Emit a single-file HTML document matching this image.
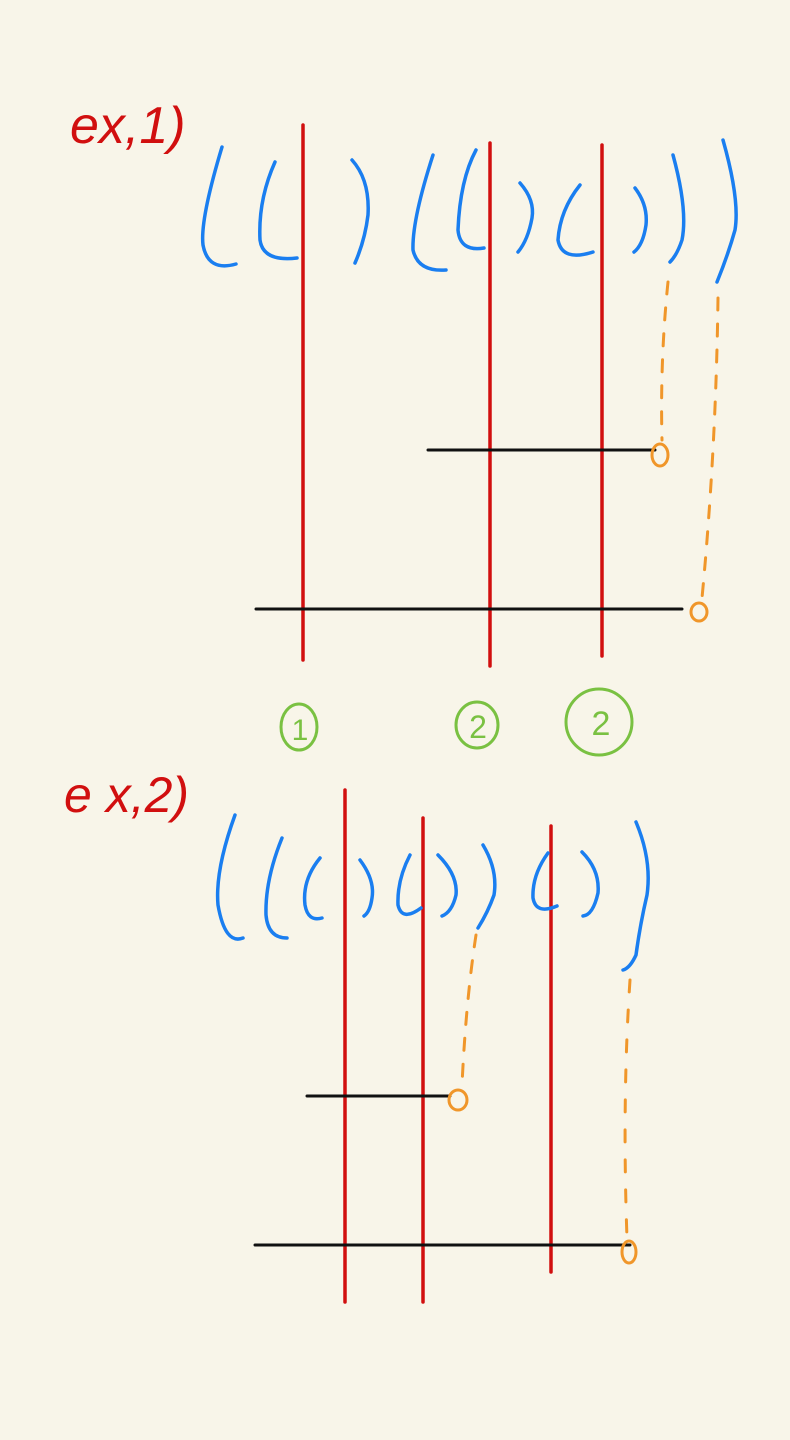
<!DOCTYPE html>
<html><head><meta charset="utf-8"><style>
html,body{margin:0;padding:0;background:#f8f5e9;}
svg{display:block}
</style></head><body>
<svg width="790" height="1440" viewBox="0 0 790 1440" xmlns="http://www.w3.org/2000/svg">
<rect width="790" height="1440" fill="#f8f5e9"/>
<text x="70" y="143" fill="#d10f0f" font-family="Liberation Sans, sans-serif" font-size="52" font-style="italic">ex,1)</text>
<text x="64" y="812" fill="#d10f0f" font-family="Liberation Sans, sans-serif" font-size="50" font-style="italic">e x,2)</text>

<g stroke="#d10f0f" stroke-width="3.5" stroke-linecap="round" fill="none">
<line x1="303" y1="125" x2="303" y2="660"/>
<line x1="490" y1="143" x2="490" y2="666"/>
<line x1="602" y1="145" x2="602" y2="656"/>
<line x1="345" y1="790" x2="345" y2="1302"/>
<line x1="423" y1="818" x2="423" y2="1302"/>
<line x1="551" y1="826" x2="551" y2="1272"/>
</g>
<g stroke="#111" stroke-width="3" stroke-linecap="round">
<line x1="428" y1="450" x2="655" y2="450"/>
<line x1="256" y1="609" x2="682" y2="609"/>
<line x1="307" y1="1096" x2="450" y2="1096"/>
<line x1="255" y1="1245" x2="630" y2="1245"/>
</g>
<g stroke="#1a7ef0" stroke-width="3.5" stroke-linecap="round" fill="none">
<path d="M222,147 Q200,220 203,245 Q208,272 236,264"/>
<path d="M275,162 Q258,200 260,240 Q263,262 297,258"/>
<path d="M352,160 Q370,180 368,215 Q365,240 355,263"/>
<path d="M433,155 Q412,220 413,250 Q418,272 446,270"/>
<path d="M476,150 Q460,180 458,230 Q460,252 484,248"/>
<path d="M520,183 Q535,200 532,218 Q528,240 518,252"/>
<path d="M580,185 Q560,210 558,240 Q562,262 593,252"/>
<path d="M635,188 Q648,205 646,225 Q643,245 634,252"/>
<path d="M673,155 Q688,210 682,240 Q677,255 670,262"/>
<path d="M723,140 Q740,200 735,230 Q728,255 717,282"/>
<path d="M235,815 Q215,870 218,905 Q225,945 243,938"/>
<path d="M282,838 Q265,880 266,915 Q268,938 287,938"/>
<path d="M320,858 Q302,880 305,905 Q308,922 322,918"/>
<path d="M360,860 Q375,880 372,898 Q370,912 364,916"/>
<path d="M410,855 Q397,880 398,905 Q402,922 421,908"/>
<path d="M438,855 Q458,875 456,895 Q452,912 442,916"/>
<path d="M483,845 Q498,870 494,895 Q488,912 478,928"/>
<path d="M548,853 Q532,875 533,898 Q536,915 557,906"/>
<path d="M582,852 Q600,870 598,893 Q593,915 583,916"/>
<path d="M636,822 Q652,860 647,895 Q640,925 636,955 Q630,968 623,970"/>
</g>
<g stroke="#f0962a" stroke-width="3" stroke-linecap="round" fill="none">
<path d="M668,282 Q660,360 662,440" stroke-dasharray="12,14"/>
<ellipse cx="660" cy="455" rx="8" ry="11"/>
<path d="M718,298 Q716,450 702,598" stroke-dasharray="12,14"/>
<ellipse cx="699" cy="612" rx="8" ry="9"/>
<path d="M476,935 Q466,1000 462,1085" stroke-dasharray="12,14"/>
<ellipse cx="458" cy="1100" rx="9" ry="10"/>
<path d="M630,980 Q622,1100 627,1238" stroke-dasharray="12,18"/>
<ellipse cx="629" cy="1252" rx="7" ry="11"/>
</g>
<g stroke="#7ac142" stroke-width="3" fill="none">
<ellipse cx="299" cy="727" rx="18" ry="23"/>
<ellipse cx="477" cy="725" rx="21" ry="23"/>
<ellipse cx="599" cy="722" rx="33" ry="33"/>
</g>
<g fill="#7ac142" font-family="Liberation Sans, sans-serif" text-anchor="middle">
<text x="300" y="740" font-size="30">1</text>
<text x="478" y="738" font-size="32">2</text>
<text x="601" y="735" font-size="34">2</text>
</g>
</svg>
</body></html>
